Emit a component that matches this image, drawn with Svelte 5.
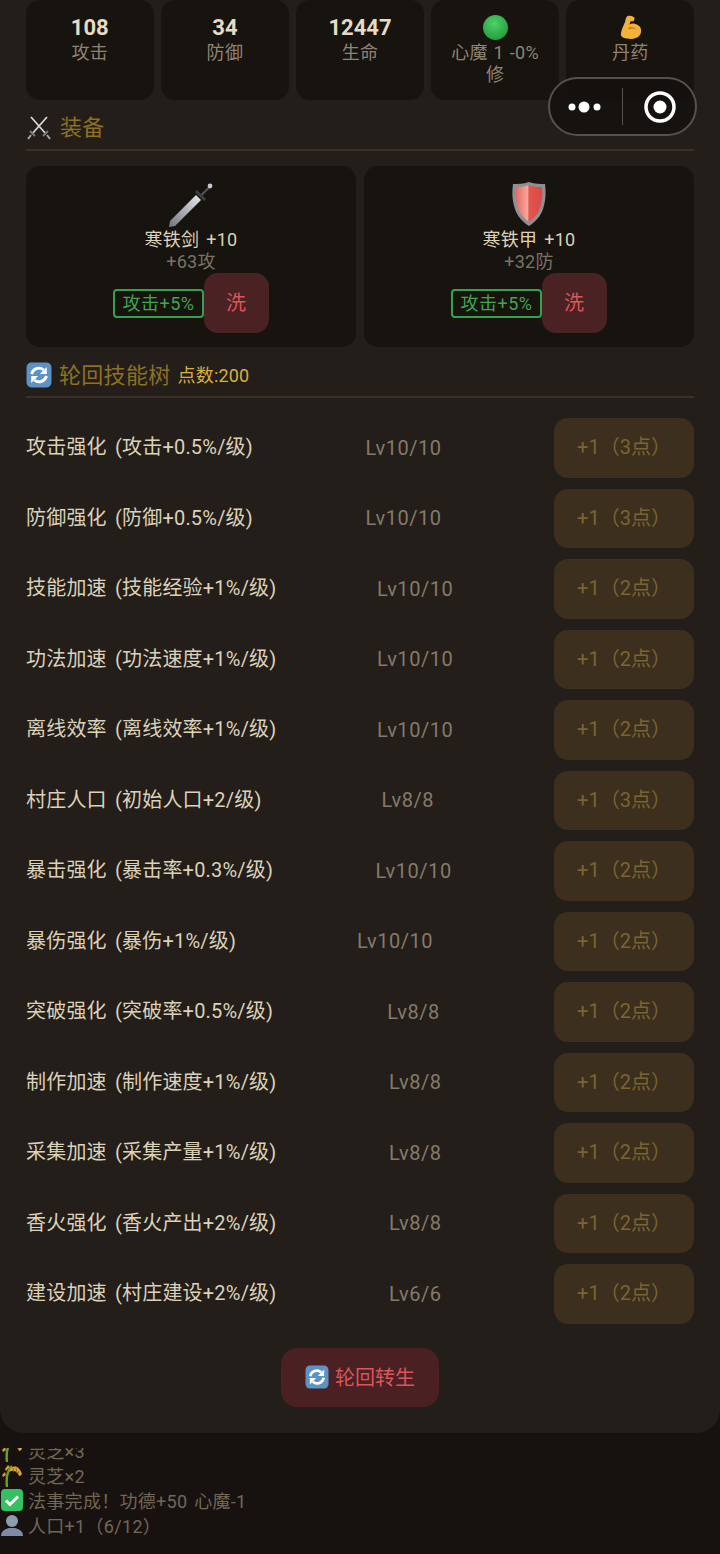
<script>
	const stats = [
		{ value: '108', label: '攻击' },
		{ value: '34', label: '防御' },
		{ value: '12447', label: '生命' }
	];

	const gear = [
		{ icon: 'sword', name: '寒铁剑 +10', bonus: '+63攻', affix: '攻击+5%' },
		{ icon: 'shield', name: '寒铁甲 +10', bonus: '+32防', affix: '攻击+5%' }
	];

	const skills = [
		{ name: '攻击强化 (攻击+0.5%/级)', level: 'Lv10/10', cost: 3 },
		{ name: '防御强化 (防御+0.5%/级)', level: 'Lv10/10', cost: 3 },
		{ name: '技能加速 (技能经验+1%/级)', level: 'Lv10/10', cost: 2 },
		{ name: '功法加速 (功法速度+1%/级)', level: 'Lv10/10', cost: 2 },
		{ name: '离线效率 (离线效率+1%/级)', level: 'Lv10/10', cost: 2 },
		{ name: '村庄人口 (初始人口+2/级)', level: 'Lv8/8', cost: 3 },
		{ name: '暴击强化 (暴击率+0.3%/级)', level: 'Lv10/10', cost: 2 },
		{ name: '暴伤强化 (暴伤+1%/级)', level: 'Lv10/10', cost: 2 },
		{ name: '突破强化 (突破率+0.5%/级)', level: 'Lv8/8', cost: 2 },
		{ name: '制作加速 (制作速度+1%/级)', level: 'Lv8/8', cost: 2 },
		{ name: '采集加速 (采集产量+1%/级)', level: 'Lv8/8', cost: 2 },
		{ name: '香火强化 (香火产出+2%/级)', level: 'Lv8/8', cost: 2 },
		{ name: '建设加速 (村庄建设+2%/级)', level: 'Lv6/6', cost: 2 }
	];
</script>

{#snippet cycle(size)}
	<svg width={size} height={size} viewBox="0 0 24 24" class="icon">
		<rect x="0.5" y="0.5" width="23" height="23" rx="4.500" fill="#5b93c7" />
		<path d="M5.200 11.200a6.800 6.800 0 0 1 11-4" stroke="#fff" stroke-width="2.600" fill="none" />
		<path d="M19.200 4.600v6.400h-6.400z" fill="#fff" />
		<path d="M18.800 12.800a6.800 6.800 0 0 1-11 4" stroke="#fff" stroke-width="2.600" fill="none" />
		<path d="M4.800 19.400v-6.400h6.400z" fill="#fff" />
	</svg>
{/snippet}

{#snippet rice()}
	<svg width="22" height="24" viewBox="0 0 22 24" class="icon">
		<path d="M6 24C5 16 6 8 11 3" stroke="#6fa02c" stroke-width="2.400" fill="none" />
		<path d="M8 9C11 1 18 2 21 11c-1 1-2 2-3 2-1-4-5-7-10-4z" fill="#e2a53c" />
		<path d="M12 5l1 4M15 5l1 5M18 8l-1 3" stroke="#9c6a1c" stroke-width="1" />
		<path d="M4 6l3-4 2 2-4 4zM1 12l3-3 1 3-3 2z" fill="#d99a34" />
	</svg>
{/snippet}

<div class="page">
	<main class="panel">
		<section class="stats">
			{#each stats as s}
				<div class="stat">
					<div class="value">{s.value}</div>
					<div class="label">{s.label}</div>
				</div>
			{/each}
			<div class="stat">
				<svg class="stat-icon" width="25" height="25" viewBox="0 0 24 24">
					<defs>
						<radialGradient id="ball" cx="0.45" cy="0.35" r="0.7">
							<stop offset="0" stop-color="#4fd067" />
							<stop offset="1" stop-color="#1f9a3c" />
						</radialGradient>
					</defs>
					<circle cx="12" cy="12" r="12" fill="url(#ball)" />
				</svg>
				<div class="label">心魔 1 -0%修</div>
			</div>
			<div class="stat">
				<svg class="stat-icon" width="25" height="25" viewBox="0 0 24 24">
					<path d="M9 1c3-1 6 0 7 2l-1 3-3 0-1 3c2-1 5-1 7 0 3 1 5 4 4 8-1 4-5 6-10 6-4 0-8-1-9-3-1-3 2-9 4-14 0-2 1-4 2-5z" fill="#f3b13a" />
					<path d="M10 12c3-1 6 0 8 2-3-1-5-1-8 0z" fill="#c9821f" />
				</svg>
				<div class="label">丹药</div>
			</div>
		</section>

		<h2 class="heading">
			<svg class="icon" width="26" height="26" viewBox="0 0 26 26">
				<path d="M5 2l15 17M21 2L6 19" stroke="#d3d6da" stroke-width="1.800" fill="none" />
				<path d="M17 21l5-5M9 21l-5-5" stroke="#77797d" stroke-width="1.800" fill="none" />
				<path d="M21 20l3 4M5 20l-3 4" stroke="#a5a7ab" stroke-width="2" fill="none" />
			</svg>
			<span>装备</span>
		</h2>

		<section class="gear">
			{#each gear as g}
				<div class="gear-card">
					{#if g.icon === 'sword'}
						<svg class="gear-icon" width="44" height="46" viewBox="0 0 44 46">
							<defs>
								<linearGradient id="blade" x1="0" y1="1" x2="1" y2="0">
									<stop offset="0" stop-color="#70757b" />
									<stop offset="1" stop-color="#e8eaec" />
								</linearGradient>
							</defs>
							<path d="M0 46l1-6 26-26 5 5-26 26z" fill="url(#blade)" />
							<path d="M26 11l9 9 2-2-9-9z" fill="#3d4044" />
							<path d="M32 13l8-8 1.500 1.500-8 8z" fill="#50545a" />
							<circle cx="41" cy="5" r="2.400" fill="#c5c8cc" />
						</svg>
					{:else}
						<svg class="gear-icon" width="44" height="46" viewBox="0 0 44 46">
							<defs>
								<linearGradient id="shield" x1="0" y1="0" x2="1" y2="0">
									<stop offset="0" stop-color="#e36a60" />
									<stop offset="0.45" stop-color="#f7a79d" />
									<stop offset="0.5" stop-color="#e2564f" />
									<stop offset="1" stop-color="#d94b46" />
								</linearGradient>
							</defs>
							<path d="M22 1c6 2 11 2 16 2 1 8 1 16-2 25-2 7-8 13-14 17C16 41 10 35 8 28 5 19 5 11 6 3c5 0 10 0 16-2z" fill="#8e9094" />
							<path d="M22 4c5 2 9 2 13 2 1 7 0 15-2 21-2 6-6 10-11 14-5-4-9-8-11-14C9 21 8 13 9 6c4 0 8 0 13-2z" fill="url(#shield)" />
						</svg>
					{/if}
					<div class="gear-name">{g.name}</div>
					<div class="gear-bonus">{g.bonus}</div>
					<div class="gear-actions">
						<span class="affix">{g.affix}</span>
						<button class="wash">洗</button>
					</div>
				</div>
			{/each}
		</section>

		<h2 class="heading skill-heading">
			{@render cycle(26)}
			<span>轮回技能树</span>
			<small>点数:200</small>
		</h2>

		<section class="skills">
			{#each skills as s}
				<div class="skill">
					<span class="skill-name">{s.name}</span>
					<span class="skill-level">{s.level}</span>
					<button class="plus">+1（{s.cost}点）</button>
				</div>
			{/each}
		</section>

		<div class="rebirth-wrap">
			<button class="rebirth">{@render cycle(24)}<span>轮回转生</span></button>
		</div>
	</main>

	<section class="log">
		<div class="line">{@render rice()}<span>灵芝×3</span></div>
		<div class="line">{@render rice()}<span>灵芝×2</span></div>
		<div class="line">
			<svg class="icon" width="22" height="22" viewBox="0 0 22 22">
				<rect width="22" height="22" rx="4" fill="#34c063" />
				<path d="M5 11.500l4 4 8-8" stroke="#fff" stroke-width="3" fill="none" />
			</svg>
			<span>法事完成！功德+50 心魔-1</span>
		</div>
		<div class="line">
			<svg class="icon" width="22" height="22" viewBox="0 0 22 22">
				<circle cx="11" cy="7" r="6" fill="#8f9cb0" />
				<path d="M0 22c0-5 4-7 8-8h6c4 1 8 3 8 8z" fill="#7e8ca3" />
			</svg>
			<span>人口+1（6/12）</span>
		</div>
	</section>

	<div class="capsule">
		<svg width="40" height="14" viewBox="0 0 40 14">
			<circle cx="6" cy="7" r="3.500" fill="#fff" />
			<circle cx="18" cy="7" r="5.500" fill="#fff" />
			<circle cx="31" cy="7" r="3.500" fill="#fff" />
		</svg>
		<i class="divider"></i>
		<svg width="34" height="34" viewBox="0 0 34 34">
			<circle cx="17" cy="17" r="14" stroke="#fff" stroke-width="3.500" fill="none" />
			<circle cx="17" cy="17" r="6.500" fill="#fff" />
		</svg>
	</div>
</div>

<style>
	:global(body) {
		background: #17120f;
	}

	.page {
		position: relative;
		height: 1554px;
		display: flex;
		flex-direction: column;
		overflow: hidden;
		background: #17120f;
		font-family: Roboto, "Noto Sans CJK SC", sans-serif;
	}

	.panel {
		background: #231e19;
		padding: 0 26px 26px;
		border-radius: 0 0 24px 24px;
		height: 1433px;
		box-sizing: border-box;
		flex: none;
	}

	.stats {
		display: grid;
		grid-template-columns: repeat(5, 1fr);
		gap: 7.500px;
	}

	.stat {
		height: 100px;
		background: #17130f;
		border-radius: 14px;
		text-align: center;
		padding: 15px 16px 0;
		box-sizing: border-box;
		display: flex;
		flex-direction: column;
		align-items: center;
	}

	.value {
		font-size: 22px;
		line-height: 26px;
		font-weight: 700;
		color: #e6dcc4;
	}

	.label {
		margin-top: 1px;
		font-size: 18px;
		line-height: 22px;
		letter-spacing: 0.3px;
		word-spacing: 1px;
		color: #8f8473;
	}

	.stat-icon {
		flex: none;
		margin-bottom: 1px;
	}

	.icon {
		flex: none;
	}

	.heading {
		display: flex;
		align-items: center;
		gap: 8px;
		margin: 14px 0 15px;
		padding-bottom: 8px;
		height: 27px;
		border-bottom: 2px solid #3a3026;
		font-size: 22px;
		font-weight: 400;
		color: #8e7023;
	}

	.heading span {
		margin-bottom: 5px;
		letter-spacing: 0.3px;
	}

	.skill-heading {
		margin: 13px 0 0;
		height: 30px;
		padding-bottom: 6px;
		gap: 7px;
	}

	.skill-heading small {
		font-size: 18px;
		font-weight: 400;
		color: #dcae42;
		margin: 0 0 3px 0;
		letter-spacing: 0.2px;
	}

	.gear {
		display: grid;
		grid-template-columns: 1fr 1fr;
		gap: 8px;
	}

	.gear-card {
		height: 181px;
		background: #17130f;
		border-radius: 14px;
		display: flex;
		flex-direction: column;
		align-items: center;
		padding-top: 15px;
		box-sizing: border-box;
	}

	.gear-icon {
		height: 46px;
		margin-bottom: 2px;
		flex: none;
	}

	.gear-name {
		font-size: 18px;
		line-height: 22px;
		letter-spacing: 0.3px;
		word-spacing: 2px;
		color: #dcd1b9;
	}

	.gear-bonus {
		font-size: 18px;
		line-height: 22px;
		letter-spacing: 0.3px;
		color: #7b7264;
	}

	.gear-actions {
		display: flex;
		align-items: center;
	}

	.affix {
		border: 2px solid #37a04a;
		border-radius: 4px;
		padding: 0 7px;
		height: 29px;
		line-height: 25px;
		letter-spacing: 0.5px;
		box-sizing: border-box;
		font-size: 18px;
		color: #3fa650;
	}

	.wash {
		width: 65px;
		height: 60px;
		border: none;
		border-radius: 14px;
		background: #4a2224;
		color: #d9565a;
		font: inherit;
		font-size: 20px;
		padding: 0 0 4px;
	}

	.skills {
		padding-top: 20px;
	}

	.skill {
		display: flex;
		justify-content: space-between;
		align-items: center;
		height: 59.500px;
		margin-bottom: 11px;
	}

	.skill-name {
		margin-bottom: 4px;
		font-size: 20px;
		letter-spacing: 0.2px;
		word-spacing: 3px;
		color: #dcd1b9;
	}

	.skill-level {
		font-size: 20px;
		letter-spacing: 0.55px;
		color: #857a69;
	}

	.plus {
		width: 140px;
		height: 59.500px;
		border: none;
		border-radius: 14px;
		background: #3d2f1e;
		color: #7a6431;
		font: inherit;
		font-size: 20px;
		padding: 0 0 4px;
	}

	.rebirth-wrap {
		display: flex;
		justify-content: center;
		padding-top: 13px;
	}

	.rebirth {
		width: 158px;
		height: 59px;
		border: none;
		border-radius: 16px;
		background: #4a2023;
		color: #d9565a;
		font: inherit;
		font-size: 20px;
		padding: 0;
		display: flex;
		align-items: center;
		justify-content: center;
		gap: 6px;
	}

	.rebirth span {
		margin-bottom: 2px;
	}

	.log {
		flex: 1;
		min-height: 0;
		margin-top: 15px;
		padding-bottom: 17px;
		overflow: hidden;
		display: flex;
		flex-direction: column;
		justify-content: flex-end;
	}

	.line {
		flex: none;
		height: 25px;
		display: flex;
		align-items: center;
		gap: 5px;
		padding-left: 1px;
		font-size: 18px;
		letter-spacing: 0.3px;
		word-spacing: 2px;
		color: #716755;
	}

	.capsule {
		position: absolute;
		left: 548px;
		top: 77px;
		width: 149px;
		height: 59px;
		box-sizing: border-box;
		border: 2px solid #55524d;
		border-radius: 30px;
		background: rgba(20, 16, 14, 0.85);
		display: flex;
		align-items: center;
		padding-left: 16px;
	}

	.divider {
		width: 1px;
		height: 37px;
		background: #55524d;
		margin: 0 20px 0 16px;
	}
</style>
